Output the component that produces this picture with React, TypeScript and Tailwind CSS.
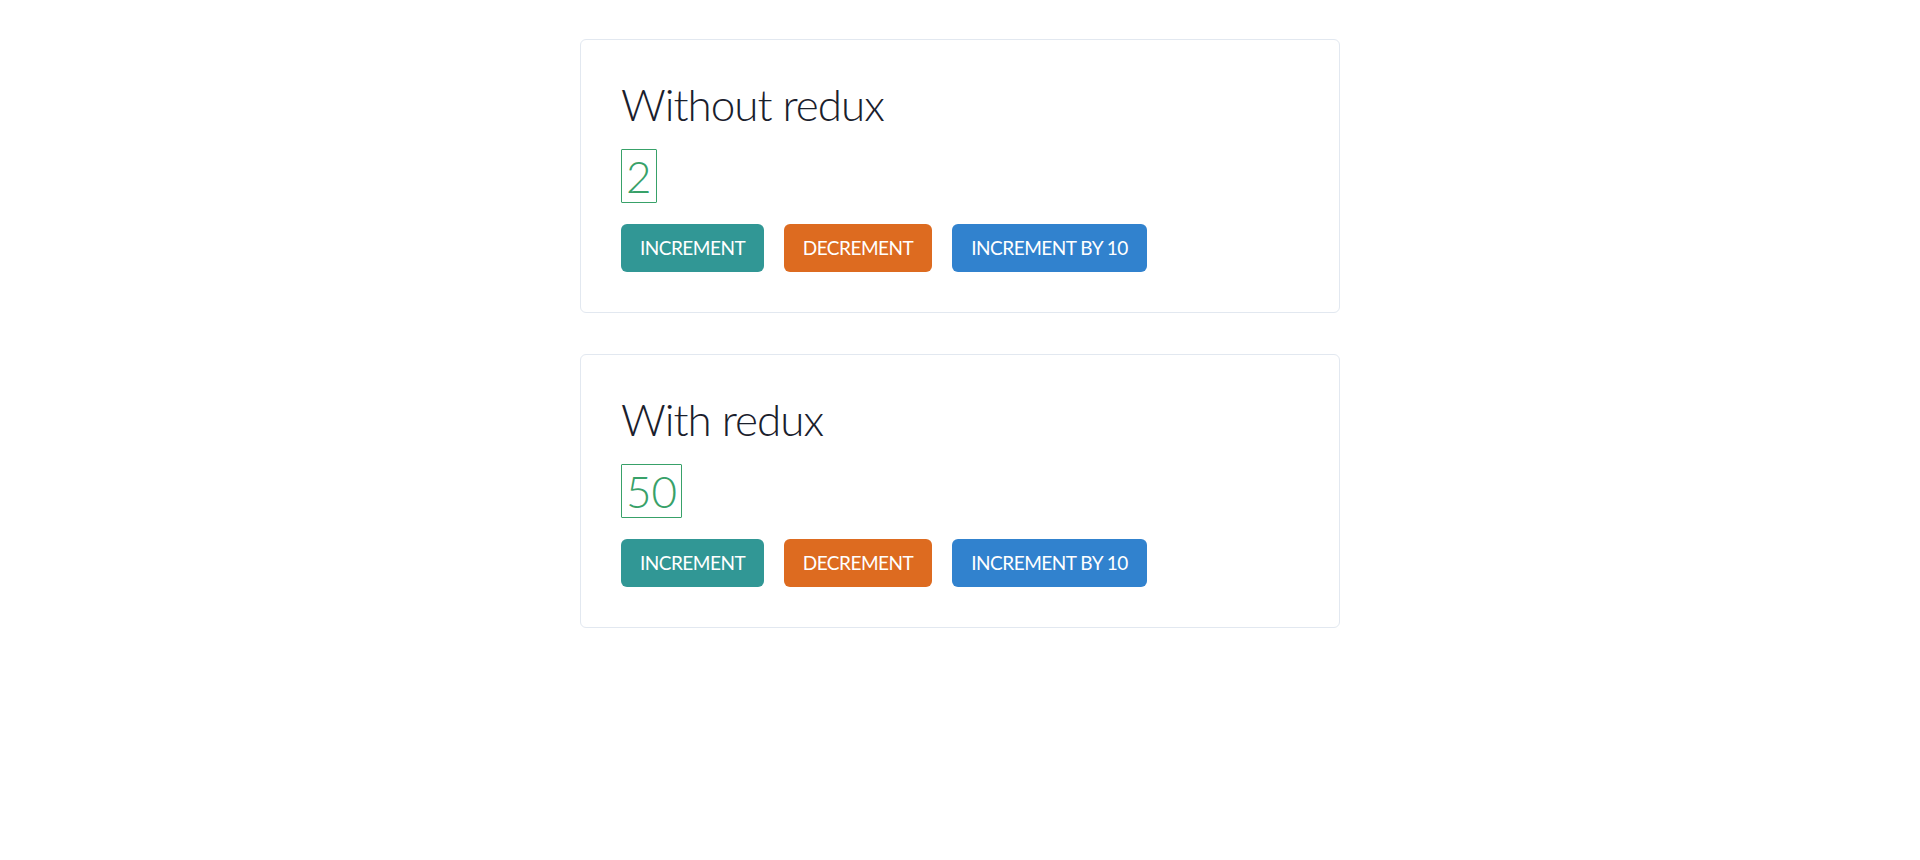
import React, { useState } from "react";

const font = { fontFamily: "Lato, 'Open Sans', sans-serif" };

function CounterCard({ title, start }: { title: string; start: number }) {
  const [count, setCount] = useState(start);

  return (
    <div className="w-[760px] border border-[#e2e8f0] rounded-md p-10 flex flex-col items-start gap-5 bg-white">
      <h2 className="text-[44px] leading-[49px] font-light text-[#1a202c] tracking-[-1px]">
        {title}
      </h2>
      <span className="border border-[#38a169] text-[#38a169] text-[44px] leading-[52px] font-light px-[4px] rounded-[1px]">
        {count}
      </span>
      <div className="flex gap-5 pt-[1px]">
        <button
          onClick={() => setCount(count + 1)}
          className="w-[143px] h-12 rounded-md bg-[#319795] text-white text-[19px] tracking-[-0.5px] uppercase"
        >
          Increment
        </button>
        <button
          onClick={() => setCount(count - 1)}
          className="w-[148px] h-12 rounded-md bg-[#dd6b20] text-white text-[19px] tracking-[-0.5px] uppercase"
        >
          Decrement
        </button>
        <button
          onClick={() => setCount(count + 10)}
          className="w-[195px] h-12 rounded-md bg-[#3182ce] text-white text-[19px] tracking-[-0.5px] uppercase"
        >
          Increment by 10
        </button>
      </div>
    </div>
  );
}

export default function App() {
  return (
    <div className="min-h-screen bg-white flex flex-col items-center pt-[39px] gap-[41px]" style={font}>
      <CounterCard title="Without redux" start={2} />
      <CounterCard title="With redux" start={50} />
    </div>
  );
}
